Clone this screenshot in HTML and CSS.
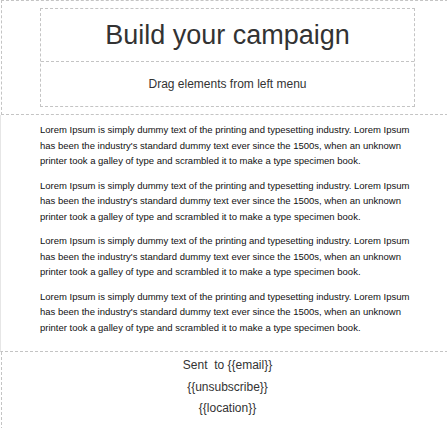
FILE: index.html
```html
<!DOCTYPE html>
<html>
<head>
<meta charset="utf-8">
<link rel="stylesheet" href="styles.css">
</head>
<body>
<div class="canvas">
  <section class="header">
    <div class="header-box">
      <h1 class="title">Build your campaign</h1>
      <div class="subtitle">Drag elements from left menu</div>
    </div>
  </section>
  <section class="content">
    <p>Lorem Ipsum is simply dummy text of the printing and typesetting industry. Lorem Ipsum has been the industry's standard dummy text ever since the 1500s, when an unknown printer took a galley of type and scrambled it to make a type specimen book.</p>
    <p>Lorem Ipsum is simply dummy text of the printing and typesetting industry. Lorem Ipsum has been the industry's standard dummy text ever since the 1500s, when an unknown printer took a galley of type and scrambled it to make a type specimen book.</p>
    <p>Lorem Ipsum is simply dummy text of the printing and typesetting industry. Lorem Ipsum has been the industry's standard dummy text ever since the 1500s, when an unknown printer took a galley of type and scrambled it to make a type specimen book.</p>
    <p>Lorem Ipsum is simply dummy text of the printing and typesetting industry. Lorem Ipsum has been the industry's standard dummy text ever since the 1500s, when an unknown printer took a galley of type and scrambled it to make a type specimen book.</p>
  </section>
  <section class="footer">
    <p>Sent&nbsp; to {{email}}</p>
    <p>{{unsubscribe}}</p>
    <p>{{location}}</p>
  </section>
</div>
</body>
</html>
```
FILE: styles.css
```css
html, body {
  margin: 0;
  padding: 0;
  overflow: hidden;
  background: #fff;
}
body {
  font-family: "Liberation Sans", Arial, sans-serif;
  color: #333;
}
.canvas {
  margin-left: 1px;
  width: 452px;
}
.header {
  border-top: 1px dashed #c4c4c4;
  border-left: 1px dashed #c4c4c4;
  border-bottom: 1px dashed #c4c4c4;
  padding: 7px 38px 7px 38px;
}
.header-box {
  border: 1px dashed #c4c4c4;
}
.title {
  margin: 0;
  font-weight: normal;
  font-size: 27px;
  line-height: 52px;
  text-align: center;
  color: #333;
  border-bottom: 1px dashed #c4c4c4;
}
.subtitle {
  font-size: 12px;
  line-height: 44px;
  text-align: center;
  color: #333;
}
.content {
  border-left: 1px solid #e6e6e6;
  margin-left: -1px;
  padding: 7px 33px 7px 39px;
  border-bottom: 1px dashed #c4c4c4;
}
.content p {
  margin: 0 0 9px 0;
  font-size: 9.5px;
  line-height: 15.5px;
  color: #111;
}
.footer {
  border-left: 1px dashed #c4c4c4;
  padding: 3px 0 10px 0;
  text-align: center;
}
.footer p {
  margin: 0;
  font-size: 12px;
  line-height: 21.6px;
  color: #333;
}
```
